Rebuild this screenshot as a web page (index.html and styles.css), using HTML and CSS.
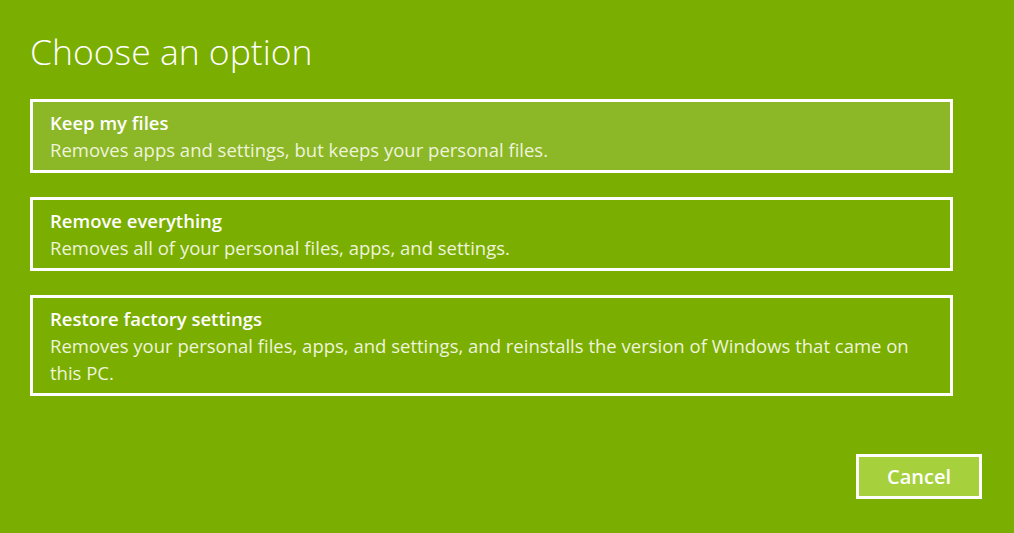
FILE: index.html
```html
<!DOCTYPE html>
<html lang="en">
<head>
  <meta charset="UTF-8">
  <title>Choose an option</title>
  <link rel="stylesheet" href="styles.css">
</head>
<body>
  <main class="page">
    <h1 class="title">Choose an option</h1>
    <div class="options">
      <button class="option hover">
        <span class="option-name">Keep my files</span>
        <span class="option-desc">Removes apps and settings, but keeps your personal files.</span>
      </button>
      <button class="option">
        <span class="option-name">Remove everything</span>
        <span class="option-desc">Removes all of your personal files, apps, and settings.</span>
      </button>
      <button class="option">
        <span class="option-name">Restore factory settings</span>
        <span class="option-desc">Removes your personal files, apps, and settings, and reinstalls the version of Windows that came on this PC.</span>
      </button>
    </div>
    <div class="actions">
      <button class="cancel">Cancel</button>
    </div>
  </main>
</body>
</html>
```

FILE: styles.css
```css
:root {
  --bg: #7aae00;
  --hover: #8cb726;
  --cancel: #a6d13c;
  --desc: #eef4dc;
}
*, *::before, *::after { box-sizing: border-box; }
body {
  margin: 0;
  background: var(--bg);
  color: #fff;
  font-family: 'Open Sans', 'Noto Sans', sans-serif;
  height: 533px;
  overflow: hidden;
}
.page { padding: 28px 61px 0 30px; }
.title {
  margin: 0 0 25px;
  font-size: 35.5px;
  font-weight: 300;
  line-height: 46px;
}
.options { display: flex; flex-direction: column; gap: 24px; }
.option {
  display: flex;
  flex-direction: column;
  align-items: flex-start;
  text-align: left;
  background: transparent;
  border: 3px solid #fff;
  padding: 7px 12px 7px 17px;
  color: #fff;
  font-family: inherit;
  font-size: 18.5px;
  line-height: 27px;
  cursor: pointer;
}
.option.hover { background: var(--hover); }
.option-name { font-weight: 600; }
.option-desc { color: var(--desc); }
.actions { display: flex; justify-content: flex-end; margin-top: 58px; }
.cancel {
  width: 126px;
  height: 45px;
  margin-right: -29px;
  background: var(--cancel);
  border: 3px solid #fff;
  color: #fff;
  font-family: inherit;
  font-size: 20px;
  font-weight: 600;
  cursor: pointer;
}
```
